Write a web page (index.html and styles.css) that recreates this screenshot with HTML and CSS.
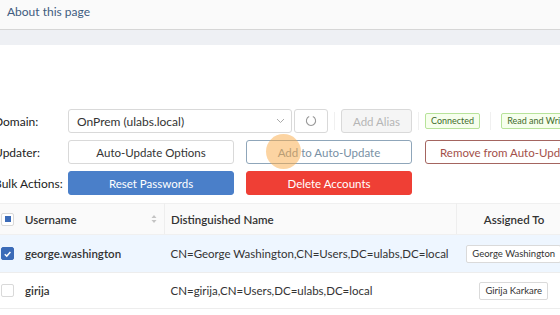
FILE: index.html
```html
<!DOCTYPE html>
<html lang="en">
<head>
    <meta charset="UTF-8">
    <title>Account Manager</title>
    <link rel="stylesheet" href="styles.css">
</head>
<body>
    <div class="topbar">
        <a class="about" href="#">About this page</a>
    </div>
    <div class="band"></div>

    <div class="form">
        <div class="row">
            <span class="label">Domain:</span>
            <div class="select">
                <span>OnPrem (ulabs.local)</span>
                <svg class="chevron" width="9" height="6" viewBox="0 0 9 6"><path d="M1 1 L4.5 4.5 L8 1" fill="none" stroke="#aaa" stroke-width="1"/></svg>
            </div>
            <button class="btn icon-btn">
                <svg width="12" height="12" viewBox="0 0 12 12"><path d="M4.2 1.6 A4.6 4.6 0 1 0 7.8 1.6" fill="none" stroke="#999" stroke-width="1.1"/></svg>
            </button>
            <span class="sep"></span>
            <button class="btn disabled">Add Alias</button>
            <span class="sep"></span>
            <span class="tag ok">Connected</span>
            <span class="sep wide-sep"></span>
            <span class="tag ok">Read and Write</span>
        </div>
        <div class="row">
            <span class="label">Updater:</span>
            <button class="btn wide">Auto-Update Options</button>
            <button class="btn wide outline-blue">Add to Auto-Update</button>
            <button class="btn wide outline-red">Remove from Auto-Update</button>
        </div>
        <div class="row">
            <span class="label">Bulk Actions:</span>
            <button class="btn wide primary">Reset Passwords</button>
            <button class="btn wide danger">Delete Accounts</button>
        </div>
        <div class="cursor"></div>
    </div>

    <table class="users">
        <thead>
            <tr>
                <th class="c-check"><span class="box partial"></span></th>
                <th class="c-user">Username
                    <svg class="sorter" width="6" height="10" viewBox="0 0 6 10"><path d="M3 1 L5.5 4 L0.5 4 Z M3 9 L5.5 6 L0.5 6 Z" fill="#c4c4c4"/></svg>
                </th>
                <th class="c-dn">Distinguished Name</th>
                <th class="c-assigned">Assigned To</th>
            </tr>
        </thead>
        <tbody>
            <tr class="selected">
                <td class="c-check"><span class="box checked">
                    <svg width="12" height="12" viewBox="0 0 12 12"><path d="M3 6.2 L5.2 8.3 L9.2 3.9" fill="none" stroke="#fff" stroke-width="1.6"/></svg>
                </span></td>
                <td class="c-user">george.washington</td>
                <td class="c-dn">CN=George Washington,CN=Users,DC=ulabs,DC=local</td>
                <td class="c-assigned"><span class="person">George Washington</span></td>
            </tr>
            <tr>
                <td class="c-check"><span class="box"></span></td>
                <td class="c-user">girija</td>
                <td class="c-dn">CN=girija,CN=Users,DC=ulabs,DC=local</td>
                <td class="c-assigned"><span class="person">Girija Karkare</span></td>
            </tr>
        </tbody>
    </table>
</body>
</html>
```

FILE: styles.css
```css
body {
    margin: 0;
    width: 560px;
    height: 315px;
    overflow: hidden;
    font-family: Lato, "Open Sans", sans-serif;
    color: #333;
    background-color: #FFFFFF;
}
.topbar {
    height: 29px;
    background-color: #FAFAFA;
    border-bottom: 1px solid #D6D6D6;
    display: flex;
    align-items: center;
    padding-left: 7px;
}
.about {
    font-size: 12px;
    color: #3E5C80;
    text-decoration: none;
    margin-top: -7px;
}
.band {
    height: 15px;
    background-color: #EEF0F4;
}
.form {
    position: relative;
    margin-top: 64px;
    margin-left: -6px;
    display: flex;
    flex-direction: column;
    gap: 7px;
}
.row {
    display: flex;
    align-items: center;
    height: 24px;
    white-space: nowrap;
}
.label {
    width: 74px;
    flex-shrink: 0;
    font-size: 12px;
    color: #222;
}
.select {
    width: 224px;
    height: 24px;
    box-sizing: border-box;
    border: 1px solid #D9D9D9;
    border-radius: 3px;
    display: flex;
    align-items: center;
    justify-content: space-between;
    padding: 0 6px 0 8px;
    font-size: 12px;
    color: #333;
    flex-shrink: 0;
}
.btn {
    height: 24px;
    box-sizing: border-box;
    border: 1px solid #D9D9D9;
    border-radius: 3px;
    background-color: #FFFFFF;
    font-family: inherit;
    font-size: 11.5px;
    color: #333;
    padding: 0 10px;
    flex-shrink: 0;
    white-space: nowrap;
}
.icon-btn {
    width: 34px;
    margin-left: 2px;
    display: flex;
    align-items: center;
    justify-content: center;
    padding: 0;
}
.disabled {
    width: 71px;
    background-color: #F5F5F5;
    color: #B5B5B5;
    padding: 0;
}
.sep {
    width: 1px;
    height: 18px;
    background-color: #F0F0F0;
    margin: 0 6px;
    flex-shrink: 0;
}
.wide-sep {
    margin: 0 10px;
}
.tag {
    height: 16px;
    box-sizing: border-box;
    font-size: 9px;
    line-height: 14px;
    padding: 0 5px;
    border-radius: 2px;
    flex-shrink: 0;
}
.ok {
    border: 1px solid #B7E39A;
    background-color: #F6FFED;
    color: #3F6B2A;
}
.wide {
    width: 166px;
    margin-right: 12px;
    padding: 0;
}
.outline-blue {
    border-color: #8FA6BA;
    color: #7890A4;
}
.outline-red {
    border-color: #A46560;
    color: #A3504A;
    margin-left: 1px;
}
.primary {
    background-color: #4A7FC9;
    border-color: #4A7FC9;
    color: #FFFFFF;
}
.danger {
    background-color: #EF3F35;
    border-color: #EF3F35;
    color: #FFFFFF;
}
.cursor {
    position: absolute;
    left: 272px;
    top: 25px;
    width: 35px;
    height: 35px;
    border-radius: 50%;
    background-color: rgba(250, 170, 70, 0.5);
}
.users {
    margin-top: 8px;
    width: 571px;
    border-collapse: collapse;
    font-size: 11.5px;
    white-space: nowrap;
    table-layout: fixed;
}
.users th {
    height: 30px;
    background-color: #FAFAFA;
    font-weight: 600;
    text-align: left;
    color: #333;
    border-top: 1px solid #F0F0F0;
    border-bottom: 1px solid #F0F0F0;
    padding: 0;
    position: relative;
}
.users td {
    padding: 0;
    border-bottom: 1px solid #EDEDED;
}
.users tbody tr {
    height: 36px;
}
.users tr.selected td {
    background-color: #EEF6FF;
    height: 37px;
}
.c-check {
    width: 18px;
}
th.c-user, th.c-dn {
    border-right: 1px solid #EEEEEE;
}
.users th.c-user, .users td.c-user {
    width: 139px;
    padding-left: 7px;
}
.users td.c-user {
    font-weight: 600;
    color: #333;
}
.users th.c-dn, .users td.c-dn {
    padding-left: 6px;
    width: 285px;
    color: #333;
}
.users th.c-assigned, .users td.c-assigned {
    text-align: center;
}
.sorter {
    position: absolute;
    right: 7px;
    top: 10px;
}
.box {
    display: flex;
    align-items: center;
    justify-content: center;
    width: 11px;
    height: 11px;
    margin-left: 1px;
    border: 1px solid #D9D9D9;
    border-radius: 2px;
    background-color: #FFFFFF;
}
.partial::after {
    content: "";
    width: 6px;
    height: 6px;
    background-color: #3B6BB8;
}
.checked {
    background-color: #3B6BB8;
    border-color: #3B6BB8;
}
.person {
    display: inline-block;
    font-size: 9.5px;
    line-height: 16px;
    padding: 0 5px;
    border: 1px solid #DADADA;
    border-radius: 2px;
    background-color: #FFFFFF;
    color: #333;
}
```
